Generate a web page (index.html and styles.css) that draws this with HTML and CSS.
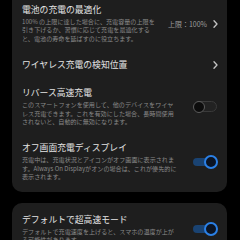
FILE: index.html
```html
<!DOCTYPE html>
<html lang="ja">
<head>
<meta charset="utf-8">
<link rel="stylesheet" href="styles.css">
</head>
<body>
<div class="screen">
  <section class="card card-cont">
    <div class="row">
      <div class="text">
        <div class="title">電池の充電の最適化</div>
        <div class="sub">100% の上限に達した場合に、充電容量の上限を<br>引き下げるか、習慣に応じて充電を最適化する<br>と、電池の寿命を延ばすのに役立ちます。</div>
      </div>
      <span class="value">上限：100%</span>
      <svg class="chev" viewBox="0 0 5 8" width="5" height="8"><path d="M1 0.8 L4 4 L1 7.2" fill="none" stroke="#c4c4c4" stroke-width="1.3" stroke-linecap="round" stroke-linejoin="round"/></svg>
    </div>
    <div class="row">
      <div class="text">
        <div class="title">ワイヤレス充電の検知位置</div>
      </div>
      <svg class="chev" viewBox="0 0 5 8" width="5" height="8"><path d="M1 0.8 L4 4 L1 7.2" fill="none" stroke="#c4c4c4" stroke-width="1.3" stroke-linecap="round" stroke-linejoin="round"/></svg>
    </div>
    <div class="row">
      <div class="text">
        <div class="title">リバース高速充電</div>
        <div class="sub">このスマートフォンを使用して、他のデバイスをワイヤ<br>レス充電できます。これを有効にした場合、長時間使用<br>されないと、自動的に無効になります。</div>
      </div>
      <span class="toggle off"><span class="thumb"></span></span>
    </div>
    <div class="row">
      <div class="text">
        <div class="title">オフ画面充電ディスプレイ</div>
        <div class="sub">充電中は、充電状況とアイコンがオフ画面に表示されま<br>す。Always On Displayがオンの場合は、これが優先的に<br>表示されます。</div>
      </div>
      <span class="toggle on"><span class="thumb"></span></span>
    </div>
  </section>
  <section class="card">
    <div class="row">
      <div class="text">
        <div class="title">デフォルトで超高速モード</div>
        <div class="sub">デフォルトで充電速度を上げると、スマホの温度が上が<br>る可能性があります。</div>
      </div>
      <span class="toggle on"><span class="thumb"></span></span>
    </div>
  </section>
</div>
</body>
</html>
```

FILE: styles.css
```css
html, body {
  margin: 0;
  padding: 0;
  background: #000;
}
body {
  font-family: "Noto Sans CJK JP", "Noto Sans", sans-serif;
  color: #e6e6e6;
  overflow: hidden;
}
.screen {
  margin-top: -20px;
}
.card {
  background: #1e1e1e;
  border-radius: 10px;
  margin: 0 13px 0 12px;
  padding: 3px 9px 2px 10px;
}
.card-cont {
  padding-top: 16px;
}
.card + .card {
  margin-top: 11px;
}
.row {
  display: flex;
  align-items: center;
  padding: 8px 0;
}
.text {
  flex: 1;
  min-width: 0;
}
.title {
  font-size: 8.8px;
  line-height: 12px;
  color: #e4e4e4;
  white-space: nowrap;
}
.sub {
  font-size: 6.1px;
  line-height: 8.4px;
  color: #8a8a8a;
  margin-top: 2px;
  white-space: nowrap;
}
.value {
  font-size: 7px;
  color: #9c9c9c;
  margin-left: 13px;
  margin-right: 6px;
  white-space: nowrap;
}
.chev {
  display: block;
  flex: none;
}
.toggle {
  position: relative;
  flex: none;
  width: 25px;
  height: 14px;
  margin-left: 16px;
}
.toggle.off::before {
  content: "";
  position: absolute;
  left: 1px;
  right: 1px;
  top: 1.5px;
  height: 11px;
  box-sizing: border-box;
  border: 1px solid #3a3a3a;
  background: #222;
  border-radius: 6px;
}
.toggle.off .thumb {
  position: absolute;
  left: 0;
  top: 1px;
  width: 12px;
  height: 12px;
  box-sizing: border-box;
  border-radius: 50%;
  border: 1.5px solid #5c5c5c;
  background: #0c0c0c;
}
.toggle.on::before {
  content: "";
  position: absolute;
  left: 0;
  right: 5px;
  top: 3px;
  height: 8px;
  background: #1a4372;
  border-radius: 4px;
}
.toggle.on .thumb {
  position: absolute;
  right: 0;
  top: 0;
  width: 14px;
  height: 14px;
  box-sizing: border-box;
  border-radius: 50%;
  border: 2px solid #2b80e6;
  background: #0b1424;
}
```
